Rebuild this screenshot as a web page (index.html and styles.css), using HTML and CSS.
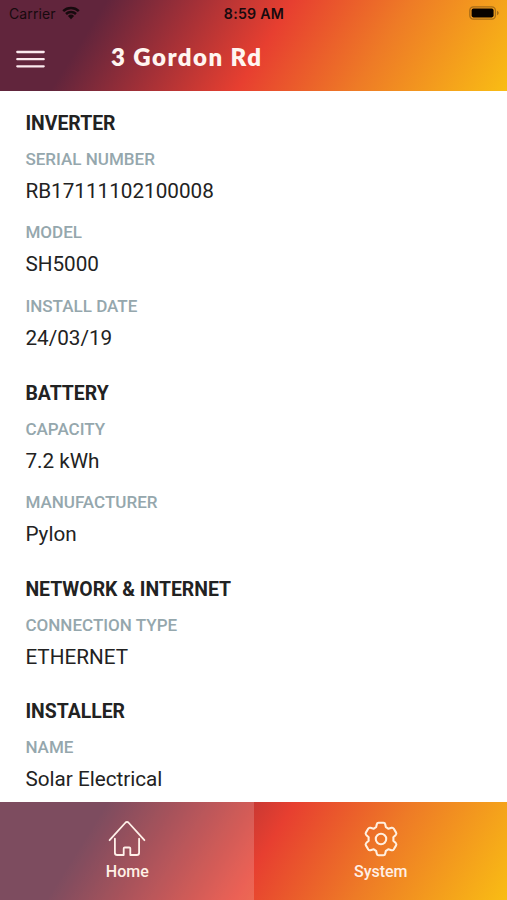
FILE: index.html
```html
<!DOCTYPE html>
<html lang="en">
<head>
<meta charset="utf-8">
<title>3 Gordon Rd</title>
<link rel="stylesheet" href="styles.css">
</head>
<body>
<div class="app">
  <header class="header">
    <div class="status">
      <div class="carrier"><span>Carrier</span>
        <svg class="wifi" width="18" height="14" viewBox="0 0 18 14"><path d="M1.2 5.1a11.3 11.3 0 0 1 15.6 0M4 8a7.2 7.2 0 0 1 10 0" fill="none" stroke="#170a0e" stroke-width="2.5"/><path d="M5.9 10a4.5 4.5 0 0 1 6.2 0L9 13.3z" fill="#170a0e"/></svg>
      </div>
      <div class="clock">8:59 AM</div>
      <svg class="battery" width="31" height="14" viewBox="0 0 31 14"><rect x=".8" y=".8" width="25.6" height="12.4" rx="3.6" fill="none" stroke="#8e5d17" stroke-opacity=".75" stroke-width="1.3"/><rect x="2.6" y="2.6" width="22" height="8.8" rx="1.8" fill="#080300"/><path d="M28 4.8c2.3.8 2.3 3.6 0 4.4z" fill="#8e5d17" fill-opacity=".8"/></svg>
    </div>
    <div class="bar">
      <svg class="menu" width="29" height="19" viewBox="0 0 29 19"><path d="M1.3 2h26.4M1.3 9.2h26.4M1.3 16.3h26.4" stroke="#fbe9ee" stroke-width="2.3" stroke-linecap="round"/></svg>
      <h1>3 Gordon Rd</h1>
    </div>
  </header>
  <main class="content">
    <section>
      <h2>INVERTER</h2>
      <dl>
        <div class="item"><dt>SERIAL NUMBER</dt><dd>RB17111102100008</dd></div>
        <div class="item"><dt>MODEL</dt><dd>SH5000</dd></div>
        <div class="item"><dt>INSTALL DATE</dt><dd>24/03/19</dd></div>
      </dl>
    </section>
    <section>
      <h2>BATTERY</h2>
      <dl>
        <div class="item"><dt>CAPACITY</dt><dd>7.2 kWh</dd></div>
        <div class="item"><dt>MANUFACTURER</dt><dd>Pylon</dd></div>
      </dl>
    </section>
    <section>
      <h2>NETWORK &amp; INTERNET</h2>
      <dl>
        <div class="item"><dt>CONNECTION TYPE</dt><dd>ETHERNET</dd></div>
      </dl>
    </section>
    <section>
      <h2>INSTALLER</h2>
      <dl>
        <div class="item"><dt>NAME</dt><dd>Solar Electrical</dd></div>
      </dl>
    </section>
  </main>
  <nav class="tabs">
    <a class="tab inactive">
      <svg width="38" height="38" viewBox="0 0 38 38" fill="none" stroke="#fff0e9" stroke-width="1.8" stroke-linecap="round" stroke-linejoin="round"><path d="M1.6 20.2 17.6 2.5q1.4-1.4 2.8 0l16 17.7M6.9 18.7v14q0 2.3 2.3 2.3h6.5v-6.4q0-1.1 1.1-1.1h4.4q1.1 0 1.1 1.1V35h6.5q2.3 0 2.3-2.3v-14"/></svg>
      <span>Home</span>
    </a>
    <a class="tab">
      <svg width="38" height="38" viewBox="0.5 0.5 37 37" fill="none" stroke="#fff0e0" stroke-width="2" stroke-linejoin="round"><path d="M14.9 4.7Q15.2 3.2 16.6 3.2h4.8Q22.8 3.2 23.1 4.7L23.7 7.4Q25 8 26.1 9L29.3 8.1Q30.7 7.7 31.5 9L33.7 12.8Q34.4 14 33.4 15L31 17.2Q31.2 19 31 20.8L33.4 23Q34.4 24 33.7 25.2L31.5 29Q30.7 30.3 29.3 29.9L26.1 29Q25 30 23.7 30.6L23.1 33.3Q22.8 34.8 21.4 34.8H16.6Q15.2 34.8 14.9 33.3L14.3 30.6Q13 30 11.9 29L8.7 29.9Q7.3 30.3 6.5 29L4.3 25.2Q3.6 24 4.6 23L7 20.8Q6.8 19 7 17.2L4.6 15Q3.6 14 4.3 12.8L6.5 9Q7.3 7.7 8.7 8.1L11.9 9Q13 8 14.3 7.4Z"/><circle cx="19" cy="19" r="5.1"/></svg>
      <span>System</span>
    </a>
  </nav>
</div>
</body>
</html>
```
FILE: styles.css
```css
* { box-sizing: border-box; }
body, h1, h2, dl, dd { margin: 0; }
body {
  font-family: Roboto, "Liberation Sans", sans-serif;
  background: #fff;
}
.app {
  height: 900px;
  display: flex;
  flex-direction: column;
  overflow: hidden;
}
.header, .tabs {
  flex: none;
  background: linear-gradient(122deg, #61253c 0%, #61253c 19%, #a33037 35%, #e73f30 52%, #ee7b26 73%, #f9bd14 100%);
}
.header { height: 91px; }
.status {
  height: 28px;
  padding: 0 7px 0 9px;
  display: grid;
  grid-template-columns: 1fr auto 1fr;
  align-items: center;
  font-family: Inter, sans-serif;
  color: #170a0e;
}
.carrier {
  display: flex;
  align-items: center;
  gap: 6px;
  font-size: 14px;
  letter-spacing: .1px;
}
.carrier span, .clock { margin-top: -1px; }
.wifi { margin-top: -2px; }
.clock {
  margin-left: -1px;
  font-size: 14.2px;
  letter-spacing: .25px;
  font-weight: 600;
}
.battery { justify-self: end; margin-top: -2px; }
.bar {
  height: 63px;
  padding-left: 16px;
  display: flex;
  align-items: center;
}
.menu { flex: none; }
h1 {
  margin: -5px 0 0 66px;
  font-family: Lato, sans-serif;
  font-size: 24px;
  line-height: 30px;
  font-weight: 800;
  letter-spacing: 1.45px;
  color: #fff5f0;
}
.content {
  flex: 1;
  min-height: 0;
  overflow: hidden;
  padding: 15.5px 25px 0 25.4px;
}
h2 {
  height: 42.2px;
  padding-top: 5.3px;
  font-size: 19.4px;
  line-height: 24px;
  font-weight: 700;
  color: #222;
}
.item { height: 73.8px; }
dt {
  font-size: 17.05px;
  line-height: 20px;
  font-weight: 500;
  color: #95a7ad;
}
dd {
  padding-top: 8px;
  font-size: 20.7px;
  line-height: 28px;
  color: #222;
}
dl { margin-bottom: 6.4px; }
.tabs {
  height: 98px;
  display: grid;
  grid-template-columns: 1fr 1fr;
}
.tab {
  display: flex;
  flex-direction: column;
  align-items: center;
  padding: 18px 0 0 1px;
  font-size: 16px;
  line-height: 22px;
  font-weight: 500;
  color: #fff0e6;
}
.tab span { margin-top: 3px; }
.inactive { background: rgba(255, 255, 255, .18); }
```
